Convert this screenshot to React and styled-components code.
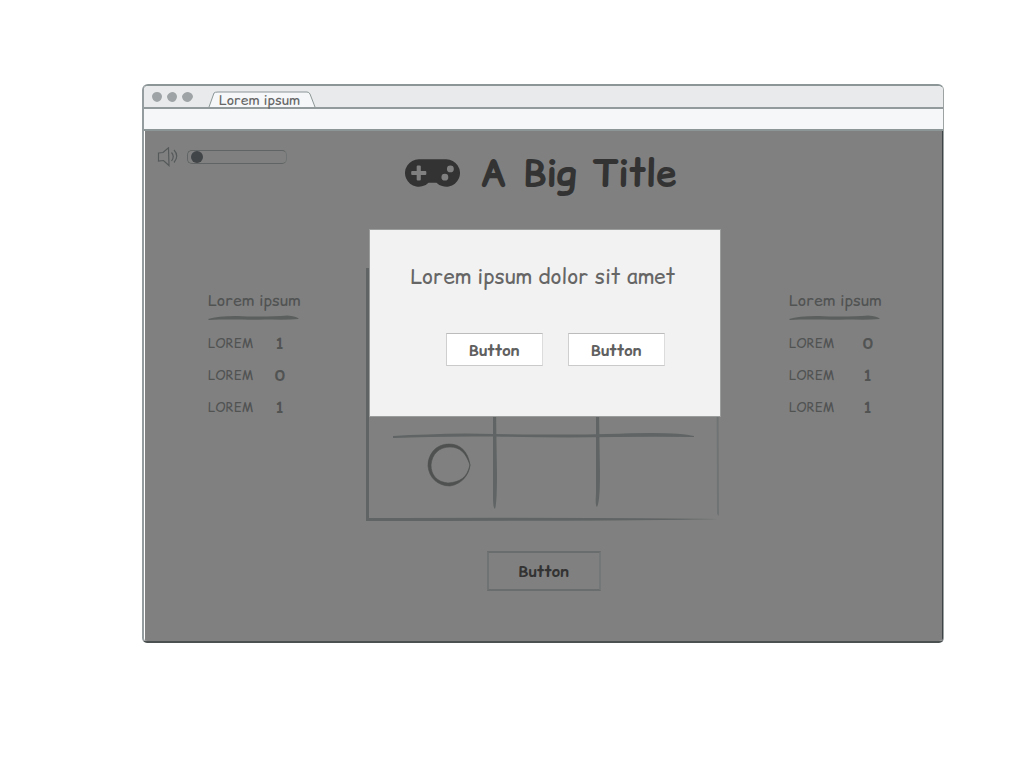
import React from 'react';
import styled, { createGlobalStyle } from 'styled-components';
import { FaGamepad } from 'react-icons/fa';

const GlobalStyle = createGlobalStyle`
  *, *::before, *::after { box-sizing: border-box; }
  body { margin: 0; background: #fff; }
  body, button, input { font-family: "Comic Sans MS", "Comic Relief", "Comic Neue", Lato, "Open Sans", sans-serif; }
`;

const Browser = styled.div`
  margin: 84px 80px 84px 142px;
  border: 2px solid;
  border-color: #8d9697 #9da2a3 #4b5051 #959c9f;
  border-right-width: 1px;
  border-radius: 6px 6px 5px 5px;
  overflow: hidden;
`;

const TabBar = styled.div`
  display: flex;
  align-items: flex-end;
  height: 23px;
  padding-left: 7px;
  background: #e8eaeb;
  border-bottom: 2px solid #929a9b;
`;

const Dots = styled.svg`
  width: 42px;
  height: 12px;
  margin-bottom: 4px;
`;

const Tab = styled.button`
  position: relative;
  width: 108px;
  height: 17px;
  margin-left: 15px;
  padding: 0 0 0 11px;
  border: 0;
  background: none;
  color: #666;
  font-size: 14px;
  line-height: 20px;
  text-align: left;
  white-space: nowrap;
`;

const TabShape = styled.svg`
  position: absolute;
  inset: 0;
  width: 100%;
  height: 100%;
`;

const TabLabel = styled.span`
  position: relative;
`;

const AddressBar = styled.div`
  height: 22px;
  background: #f5f7f9;
  border-bottom: 2px solid #8d9697;
`;

const Page = styled.div`
  position: relative;
  padding: 16px 0 50px;
  background: #808080;
  border-left: 1px solid #fff;
  border-right: 1px solid #3f4446;
`;

const Header = styled.header`
  display: grid;
  grid-template-columns: 1fr auto 1fr;
  align-items: start;
  padding: 0 17px 0 12px;
`;

const Volume = styled.label`
  display: flex;
  align-items: center;
  gap: 8px;
  height: 20px;
`;

const VolumeSlider = styled.input`
  appearance: none;
  width: 100px;
  height: 14px;
  margin: 0;
  padding: 0 3px;
  border: 1px solid #606464;
  border-right-color: #707373;
  border-radius: 5px;
  background: none;

  &::-webkit-slider-thumb {
    appearance: none;
    width: 12px;
    height: 12px;
    border-radius: 50%;
    background: #414548;
  }
`;

const Title = styled.h1`
  display: flex;
  align-items: center;
  gap: 20px;
  margin: 0;
  padding-top: 2px;
  color: #333;
  font-size: 37px;
  font-weight: 700;
  line-height: 48px;

  svg {
    width: 55px;
    height: 44px;
  }
`;

const Game = styled.main`
  display: grid;
  grid-template-columns: 1fr auto 1fr;
  align-items: start;
  margin-top: 71px;
  padding: 0 60px 0 63px;
`;

const Scores = styled.section`
  justify-self: ${(p) => p.$side};
  width: 93px;
  padding-top: 22px;
  color: #515353;
`;

const ScoresTitle = styled.h2`
  margin: 0;
  font-size: 16px;
  font-weight: 400;
  line-height: 20px;
  white-space: nowrap;
`;

const Underline = styled.svg`
  display: block;
  width: 92px;
  height: 6px;
  margin: 5px 0 6px;
`;

const ScoreTable = styled.table`
  border-collapse: collapse;

  th, td {
    height: 32px;
    padding: 0;
    line-height: 20px;
  }
  th {
    width: ${(p) => p.$labelWidth}px;
    font-size: 13px;
    font-weight: 400;
    text-align: left;
  }
  td {
    width: 10px;
    font-size: 16px;
    font-weight: 700;
    text-align: center;
  }
`;

const Board = styled.svg`
  display: block;
  width: 354px;
  height: 253px;
  margin-right: 4px;
`;

const Footer = styled.footer`
  display: flex;
  justify-content: center;
  padding-top: 30px;
`;

const Button = styled.button`
  width: 97px;
  height: 33px;
  padding: 0;
  border: 1px solid;
  border-color: #bcbcbc #dcdcdc #cacaca #cfcfcf;
  background: #fff;
  color: #606060;
  font-size: 16px;
  font-weight: 700;
  line-height: 20px;
`;

const PageButton = styled(Button)`
  width: 114px;
  height: 40px;
  border: 2px solid;
  border-color: #6a6d6d #747777 #6a6d6d #707373;
  background: none;
  color: #333;
`;

const Dialog = styled.div`
  position: absolute;
  top: 98px;
  left: calc(50% + 1px);
  width: 352px;
  height: 188px;
  margin-left: -176px;
  padding: 32px 55px 0 41px;
  border: 1px solid #9b9d9d;
  background: #f2f2f2;
`;

const DialogText = styled.p`
  margin: 0;
  color: #666;
  font-size: 21px;
  line-height: 30px;
  white-space: nowrap;
`;

const DialogActions = styled.div`
  display: flex;
  justify-content: flex-end;
  gap: 25px;
  margin-top: 41px;
`;

function ScorePanel({ side, title, labelWidth, scores }) {
  return (
    <Scores $side={side}>
      <ScoresTitle>{title}</ScoresTitle>
      <Underline viewBox="0 0 92 6" aria-hidden="true">
        <path d="M0 4 Q10 .8 30 1 C48 2 66 1.5 79 .5 Q89 1 91 4 Q80 5 64 4.6 C38 5 20 4 1 5Z" fill="#5b5f5e" />
      </Underline>
      <ScoreTable $labelWidth={labelWidth}>
        <tbody>
          {scores.map((value, i) => (
            <tr key={i}>
              <th scope="row">LOREM</th>
              <td>{value}</td>
            </tr>
          ))}
        </tbody>
      </ScoreTable>
    </Scores>
  );
}

export default function App() {
  return (
    <>
      <GlobalStyle />
      <Browser>
        <TabBar>
          <Dots viewBox="0 0 42 12" fill="#9ea3a5" aria-hidden="true">
            <path d="M1 5 Q2 1 6 1 Q10 1 11 5 Q11 10 6 11 Q1 10 1 5Z" />
            <path d="M16 5 Q18 1 22 1 Q26 2 26 6 Q25 11 21 11 Q16 10 16 5Z" />
            <path d="M31 5 Q33 1 37 1 Q42 2 42 6 Q40 11 36 11 Q31 10 31 5Z" />
          </Dots>
          <Tab type="button">
            <TabShape viewBox="0 0 108 17" preserveAspectRatio="none" aria-hidden="true">
              <path d="M1 17 L6 3 Q7 2 10 2 L99 2 Q101 2 102 4 L107 17" fill="#f5f7f9" stroke="#8d9697" />
            </TabShape>
            <TabLabel>Lorem ipsum</TabLabel>
          </Tab>
        </TabBar>
        <AddressBar />
        <Page>
          <Header>
            <Volume aria-label="Volume">
              <svg width="22" height="20" viewBox="0 0 22 20" fill="none" stroke="#55595a" strokeWidth="1.2" aria-hidden="true">
                <path d="M1.5 6 L6 5.5 L11.5 .8 L12 18.5 L6.5 13.5 L1.5 14Z" />
                <path d="M14.5 5.5 Q18 9.5 14.5 14 M17 3 Q22.5 9 17 15.5" />
              </svg>
              <VolumeSlider type="range" min="0" max="100" defaultValue="0" />
            </Volume>
            <Title>
              <FaGamepad aria-hidden="true" />
              A Big Title
            </Title>
          </Header>
          <Game>
            <ScorePanel side="start" title="Lorem ipsum" labelWidth={67} scores={[1, 0, 1]} />
            <Board viewBox="0 0 354 253" role="img" aria-label="Game board">
              <g fill="#606464">
                <path d="M0 0 H352 L351 2 H3 V250 Q200 249 352 251 Q270 253 0 253Z" />
                <path d="M350 1 H352 L353 248 L351 246Z" fill="#707373" />
                <path d="M127 10 H130 Q129 95 131 205 Q131 235 129 241 Q127 240 127 230Z" />
                <path d="M230 10 H233 Q232 95 234 205 Q234 234 231 239 Q229 238 230 225Z" />
                <path d="M27 168 Q60 166 100 165.500 L128 166 Q205 167 240 166 Q310 163 328 168 V169 Q290 168.500 250 169 Q190 170 128 168.500 Q70 168 27 170Z" />
                <path d="M27 84 Q75 81 128 82 Q205 84 240 82 Q296 79 328 85 Q290 86 128 84Z" />
              </g>
              <path
                d="M104 197 C102 183 94 176 83 176 C70 176 62 186 62 198 C63 210 72 218 84 218 C96 216 103 207 104 197 C101 210 94 214 82 215 C71 214 65 207 65 197 C66 186 73 179 84 179 C94 179 100 185 104 197Z"
                fill="#4f5050"
                stroke="#4f5050"
                strokeWidth=".6"
              />
            </Board>
            <ScorePanel side="end" title="Lorem ipsum" labelWidth={74} scores={[0, 1, 1]} />
          </Game>
          <Footer>
            <PageButton type="button">Button</PageButton>
          </Footer>
          <Dialog role="dialog" aria-labelledby="dialog-text">
            <DialogText id="dialog-text">Lorem ipsum dolor sit amet</DialogText>
            <DialogActions>
              <Button type="button">Button</Button>
              <Button type="button">Button</Button>
            </DialogActions>
          </Dialog>
        </Page>
      </Browser>
    </>
  );
}
